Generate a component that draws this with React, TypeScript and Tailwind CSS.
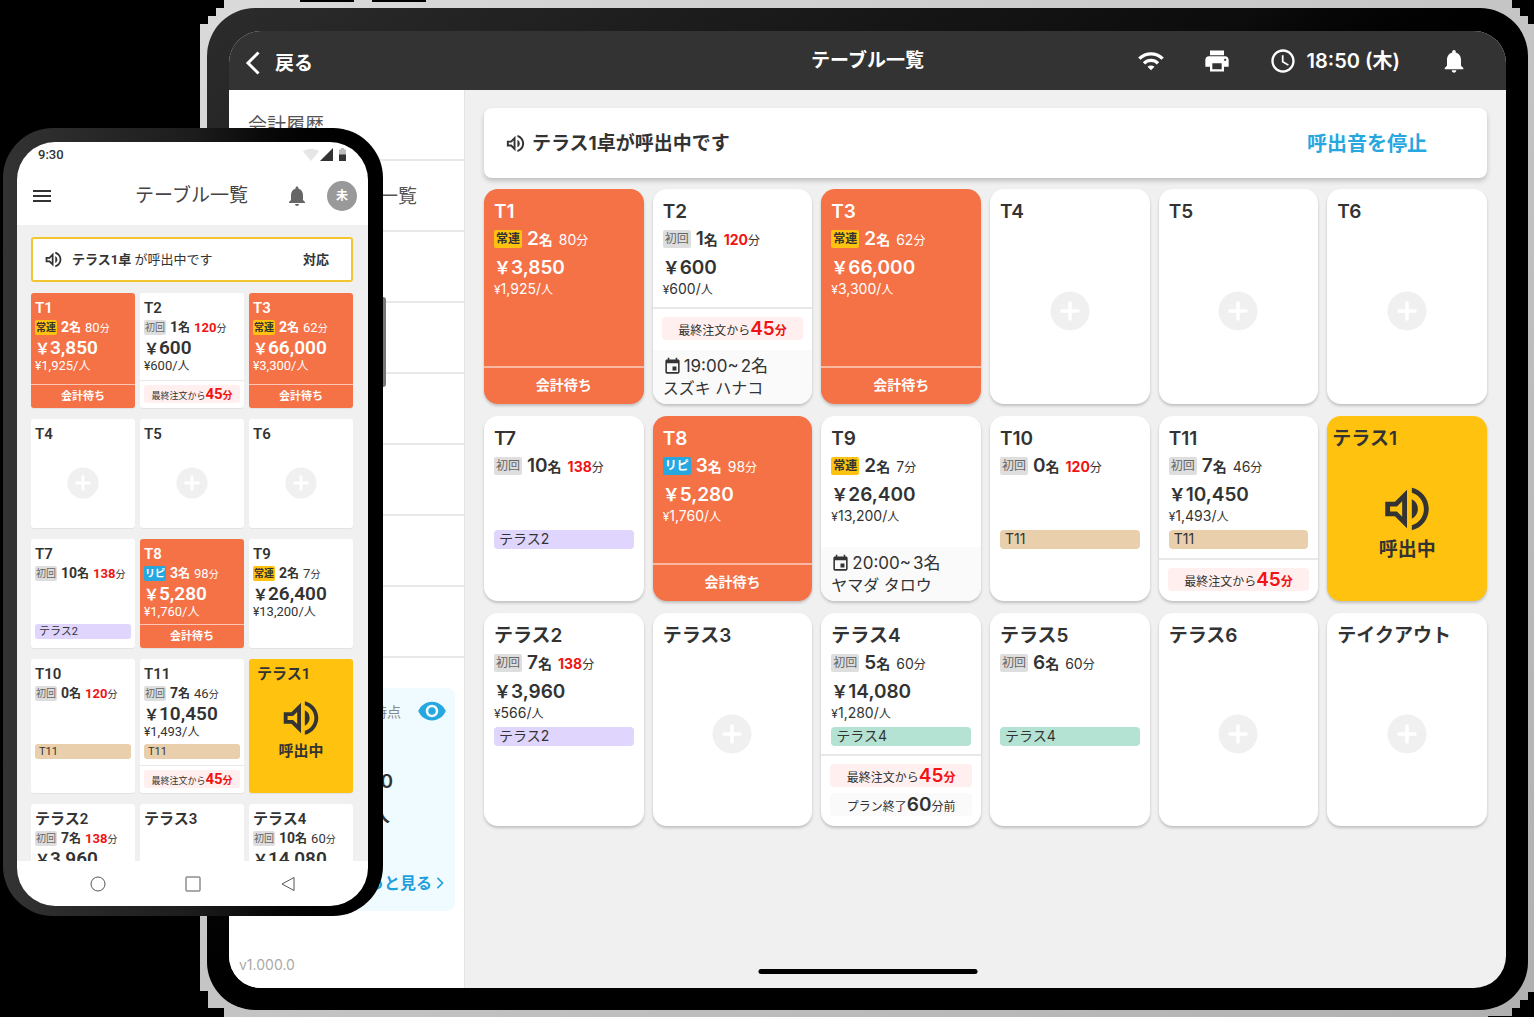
import React from "react";
import {
  MdAccessTime,
  MdEvent,
  MdMenu,
  MdNotifications,
  MdOutlineVolumeUp,
  MdPrint,
  MdVisibility,
  MdWifi,
} from "react-icons/md";

type Visit = "常連" | "初回" | "リピ";
type Tone = "plain" | "orange" | "yellow";

interface TableInfo {
  name: string;
  tone?: Tone;
  visit?: Visit;
  guests?: number;
  minutes?: number;
  total?: string;
  each?: string;
  tag?: string;
  lastOrder?: number;
  planEnd?: number;
  booking?: { time: string; party: string; guest: string };
}

const tabletTables: TableInfo[] = [
  { name: "T1", tone: "orange", visit: "常連", guests: 2, minutes: 80, total: "3,850", each: "1,925" },
  {
    name: "T2", visit: "初回", guests: 1, minutes: 120, total: "600", each: "600", lastOrder: 45,
    booking: { time: "19:00~", party: "2名", guest: "スズキ ハナコ" },
  },
  { name: "T3", tone: "orange", visit: "常連", guests: 2, minutes: 62, total: "66,000", each: "3,300" },
  { name: "T4" },
  { name: "T5" },
  { name: "T6" },
  { name: "T7", visit: "初回", guests: 10, minutes: 138, tag: "テラス2" },
  { name: "T8", tone: "orange", visit: "リピ", guests: 3, minutes: 98, total: "5,280", each: "1,760" },
  {
    name: "T9", visit: "常連", guests: 2, minutes: 7, total: "26,400", each: "13,200",
    booking: { time: "20:00~", party: "3名", guest: "ヤマダ タロウ" },
  },
  { name: "T10", visit: "初回", guests: 0, minutes: 120, tag: "T11" },
  { name: "T11", visit: "初回", guests: 7, minutes: 46, total: "10,450", each: "1,493", tag: "T11", lastOrder: 45 },
  { name: "テラス1", tone: "yellow" },
  { name: "テラス2", visit: "初回", guests: 7, minutes: 138, total: "3,960", each: "566", tag: "テラス2" },
  { name: "テラス3" },
  {
    name: "テラス4", visit: "初回", guests: 5, minutes: 60, total: "14,080", each: "1,280",
    tag: "テラス4", lastOrder: 45, planEnd: 60,
  },
  { name: "テラス5", visit: "初回", guests: 6, minutes: 60, tag: "テラス4" },
  { name: "テラス6" },
  { name: "テイクアウト" },
];

const phoneTables: TableInfo[] = [
  { name: "T1", tone: "orange", visit: "常連", guests: 2, minutes: 80, total: "3,850", each: "1,925" },
  { name: "T2", visit: "初回", guests: 1, minutes: 120, total: "600", each: "600", lastOrder: 45 },
  { name: "T3", tone: "orange", visit: "常連", guests: 2, minutes: 62, total: "66,000", each: "3,300" },
  { name: "T4" },
  { name: "T5" },
  { name: "T6" },
  { name: "T7", visit: "初回", guests: 10, minutes: 138, tag: "テラス2" },
  { name: "T8", tone: "orange", visit: "リピ", guests: 3, minutes: 98, total: "5,280", each: "1,760" },
  { name: "T9", visit: "常連", guests: 2, minutes: 7, total: "26,400", each: "13,200" },
  { name: "T10", visit: "初回", guests: 0, minutes: 120, tag: "T11" },
  { name: "T11", visit: "初回", guests: 7, minutes: 46, total: "10,450", each: "1,493", tag: "T11", lastOrder: 45 },
  { name: "テラス1", tone: "yellow" },
  { name: "テラス2", visit: "初回", guests: 7, minutes: 138, total: "3,960" },
  { name: "テラス3" },
  { name: "テラス4", visit: "初回", guests: 10, minutes: 60, total: "14,080" },
];

const toneClass: Record<Tone, string> = {
  plain: "bg-white text-[#333]",
  orange: "bg-[#f57146] text-white",
  yellow: "bg-[#ffc20e] text-[#333]",
};

const visitClass: Record<Visit, string> = {
  常連: "bg-[#ffc20e] text-[#333] font-bold",
  初回: "bg-[#dedede] text-[#666]",
  リピ: "bg-[#27a7df] text-white font-bold",
};

const tagClass: Record<string, string> = {
  テラス2: "bg-[#dfd5fd]",
  T11: "bg-[#e9cfab]",
  テラス4: "bg-[#b5e3d3]",
};

function PlusMark({ className }: { className: string }) {
  return (
    <svg viewBox="0 0 40 40" className={className} aria-hidden="true">
      <circle cx="20" cy="20" r="19.5" fill="#f0f0f0" />
      <path d="M20 12v16M12 20h16" stroke="#fff" strokeWidth="3.6" strokeLinecap="round" />
    </svg>
  );
}

function Minutes({ value, className }: { value: number; className: string }) {
  return <span className={value >= 120 ? `font-bold text-[#f01414] ${className}` : className}>{value}</span>;
}

function TabletCard({ table }: { table: TableInfo }) {
  const tone = table.tone ?? "plain";
  const empty = tone === "plain" && table.guests === undefined;
  return (
    <button
      type="button"
      className={`flex flex-col overflow-hidden rounded-[14px] text-left shadow-[0_2px_3px_rgba(0,0,0,0.2)] ${toneClass[tone]}`}
    >
      <span className={`mt-2 block h-7 pt-px text-[19px] leading-7 font-semibold whitespace-nowrap ${tone === "yellow" ? "pl-[5px]" : "pl-[10px]"}`}>
        {table.name}
      </span>
      {tone === "yellow" && (
        <span className="flex w-full flex-1 flex-col items-center justify-center pb-3">
          <MdOutlineVolumeUp className="size-[58px]" />
          <span className="text-[19px] leading-6 font-bold">呼出中</span>
        </span>
      )}
      {empty && (
        <span className="flex w-full flex-1 items-center justify-center pb-2">
          <PlusMark className="size-10" />
        </span>
      )}
      {table.guests !== undefined && (
        <>
          <span className="flex w-full flex-col px-[10px]">
            <span className="flex h-7 items-center gap-[5px]">
              <span className={`rounded-[2px] px-0.5 text-[12px] leading-[18px] ${visitClass[table.visit!]}`}>{table.visit}</span>
              <span className="flex items-baseline pt-0.5 leading-7 whitespace-nowrap">
                <span className="text-[19px] font-semibold">{table.guests}</span>
                <span className="text-[14px] font-bold">名</span>
                <Minutes value={table.minutes!} className="ml-1.5 text-[14px]" />
                <span className="text-[12px]">分</span>
              </span>
            </span>
            <span className="flex h-7 items-baseline pt-px leading-7 font-semibold whitespace-nowrap">
              {table.total && (
                <>
                  <span className="text-[17px]">￥</span>
                  <span className="text-[19px]">{table.total}</span>
                </>
              )}
            </span>
            <span className="flex h-3.5 items-baseline leading-4 whitespace-nowrap">
              {table.each && (
                <>
                  <span className="text-[12px]">¥</span>
                  <span className="text-[14px]">{table.each}/</span>
                  <span className="text-[12px]">人</span>
                </>
              )}
            </span>
            {table.tag && (
              <span className={`mt-2 block h-[19px] rounded-[4px] px-[5px] text-[14px] leading-[18px] ${tagClass[table.tag]}`}>
                {table.tag}
              </span>
            )}
          </span>
          <span className="mt-auto flex w-full flex-col">
            {tone === "orange" && (
              <span className="border-t-2 border-white/50 pb-0.5 text-center text-[14px] leading-[34px] font-bold">会計待ち</span>
            )}
            {table.lastOrder && (
              <span className="flex flex-col gap-1.5 border-t-2 border-[#e8e8e8] px-[9px] pt-2 pb-[10px]">
                <span className="flex h-[23px] items-baseline justify-center rounded-[4px] bg-[#ffefef] leading-[23px]">
                  <span className="text-[12px]">最終注文から</span>
                  <span className="text-[19px] font-semibold text-[#f01414]">{table.lastOrder}</span>
                  <span className="text-[12px] font-bold text-[#f01414]">分</span>
                </span>
                {table.planEnd && (
                  <span className="flex h-[23px] items-baseline justify-center rounded-[4px] bg-[#fafafa] leading-[23px]">
                    <span className="text-[12px]">プラン終了</span>
                    <span className="text-[19px] font-semibold">{table.planEnd}</span>
                    <span className="text-[12px]">分前</span>
                  </span>
                )}
              </span>
            )}
            {table.booking && (
              <span className="flex flex-col bg-[#fafafa] px-[10px] pt-[5px] pb-[5px] leading-[22px]">
                <span className="flex items-center gap-0.5 text-[17px]">
                  <MdEvent className="size-[19px]" />
                  <span>{table.booking.time}</span>
                  <span>{table.booking.party}</span>
                </span>
                <span className="text-[16px]">{table.booking.guest}</span>
              </span>
            )}
          </span>
        </>
      )}
    </button>
  );
}

function PhoneCard({ table }: { table: TableInfo }) {
  const tone = table.tone ?? "plain";
  const empty = tone === "plain" && table.guests === undefined;
  return (
    <button
      type="button"
      className={`flex flex-col overflow-hidden rounded-[3px] text-left shadow-[0_1px_1px_rgba(0,0,0,0.06)] ${toneClass[tone]}`}
    >
      <span className={`mt-1.5 block h-[19px] text-[15px] leading-[19px] font-semibold whitespace-nowrap ${tone === "yellow" ? "pl-2" : "pl-1"}`}>
        {table.name}
      </span>
      {tone === "yellow" && (
        <span className="flex w-full flex-1 flex-col items-center justify-center pb-[22px]">
          <MdOutlineVolumeUp className="size-[46px]" />
          <span className="text-[15px] leading-5 font-bold">呼出中</span>
        </span>
      )}
      {empty && (
        <span className="flex w-full flex-1 items-center justify-center pb-1.5">
          <PlusMark className="size-8" />
        </span>
      )}
      {table.guests !== undefined && (
        <>
          <span className="flex w-full flex-col px-1">
            <span className="flex h-[19px] items-center gap-1">
              <span className={`rounded-[2px] px-px text-[10px] leading-[15px] whitespace-nowrap ${visitClass[table.visit!]}`}>{table.visit}</span>
              <span className="flex items-baseline leading-[19px] whitespace-nowrap">
                <span className="text-[14px] font-bold">{table.guests}</span>
                <span className="text-[12px] font-bold">名</span>
                <Minutes value={table.minutes!} className="ml-1 text-[13px]" />
                <span className="text-[10px]">分</span>
              </span>
            </span>
            <span className="flex h-[22px] items-baseline leading-[22px] font-semibold whitespace-nowrap">
              {table.total && (
                <>
                  <span className="text-[15px]">￥</span>
                  <span className="text-[19px]">{table.total}</span>
                </>
              )}
            </span>
            <span className="flex h-3.5 items-baseline leading-[14px] whitespace-nowrap">
              {table.each && (
                <>
                  <span className="text-[12px]">¥</span>
                  <span className="text-[13px]">{table.each}/</span>
                  <span className="text-[12px]">人</span>
                </>
              )}
            </span>
            {table.tag && (
              <span className={`mt-[5px] block h-[15px] rounded-[3px] px-1 text-[11px] leading-[15px] ${tagClass[table.tag]}`}>
                {table.tag}
              </span>
            )}
          </span>
          <span className="mt-auto flex w-full flex-col">
            {tone === "orange" && (
              <span className="border-t border-white/60 text-center text-[11px] leading-[23px] font-bold">会計待ち</span>
            )}
            {table.lastOrder && (
              <span className="border-t border-[#e8e8e8] px-1 pt-1 pb-[5px]">
                <span className="flex h-[18px] items-baseline justify-center rounded-[3px] bg-[#ffefef] leading-[18px] whitespace-nowrap">
                  <span className="text-[9px]">最終注文から</span>
                  <span className="text-[15px] font-bold text-[#f01414]">{table.lastOrder}</span>
                  <span className="text-[10px] font-bold text-[#f01414]">分</span>
                </span>
              </span>
            )}
          </span>
        </>
      )}
    </button>
  );
}

function Tablet() {
  return (
    <div className="relative ml-[200px] flex min-h-screen bg-linear-to-br from-[#dadada] to-[#b0b0b0] pt-2 pr-1.5 pb-[7px] pl-[7px] [clip-path:polygon(24px_0,calc(100%_-_22px)_0,calc(100%_-_22px)_8px,calc(100%_-_14px)_8px,calc(100%_-_14px)_16px,calc(100%_-_6px)_16px,calc(100%_-_6px)_24px,100%_24px,100%_calc(100%_-_25px),calc(100%_-_6px)_calc(100%_-_25px),calc(100%_-_6px)_calc(100%_-_17px),calc(100%_-_14px)_calc(100%_-_17px),calc(100%_-_14px)_calc(100%_-_9px),calc(100%_-_22px)_calc(100%_-_9px),calc(100%_-_22px)_calc(100%_-_1px),calc(100%_-_46px)_calc(100%_-_1px),calc(100%_-_46px)_100%,24px_100%,24px_calc(100%_-_9px),8px_calc(100%_-_9px),8px_calc(100%_-_26px),0_calc(100%_-_26px),0_24px,8px_24px,8px_16px,16px_16px,16px_8px,24px_8px)]">
      <div className="flex flex-1 rounded-[48px] bg-linear-to-br from-[#2c2c2c] via-[#0c0c0c] via-40% to-black to-55% px-[22px] pt-[23px] pb-[22px]">
        <div className="relative flex flex-1 flex-col overflow-hidden rounded-[32px] bg-[#f0f0f0]">
          <header className="grid h-[59px] grid-cols-3 items-center bg-[#333] text-white">
            <button type="button" className="flex items-center gap-3 pt-1 pl-4 text-[19px] leading-7 font-bold">
              <svg viewBox="0 0 16 24" className="h-6 w-4" fill="none" stroke="currentColor" strokeWidth="3" aria-hidden="true">
                <path d="M13.500 1.500 3 12l10.500 10.500" />
              </svg>
              <span className="pt-0.5 pl-0.5">戻る</span>
            </button>
            <h1 className="pt-px text-center text-[19px] leading-7 font-bold">テーブル一覧</h1>
            <div className="flex items-center justify-end pr-[38px]">
              <MdWifi className="mr-[38px] size-7" />
              <MdPrint className="mr-[38px] size-7" />
              <MdAccessTime className="mr-2.5 size-7" />
              <time className="mr-10 text-[20px] leading-7 font-semibold whitespace-nowrap">18:50 (木)</time>
              <button type="button" aria-label="通知">
                <MdNotifications className="size-7" />
              </button>
            </div>
          </header>
          <div className="flex flex-1">
            <aside className="flex w-[236px] shrink-0 flex-col border-r border-[#e4e4e4] bg-white text-[#555]">
              <nav className="text-[19px]">
                <a href="#history" className="flex h-[71px] items-center border-b-2 border-[#e8e8e8] pt-1 pl-[19px]">会計履歴</a>
                <a href="#list" className="flex h-[71px] items-center border-b-2 border-[#e8e8e8] pt-1 pl-[150px]">一覧</a>
                <span className="block h-[71px] border-b-2 border-[#e8e8e8]" />
                <span className="block h-[71px] border-b-2 border-[#e8e8e8]" />
                <span className="block h-[71px] border-b-2 border-[#e8e8e8]" />
                <span className="block h-[71px] border-b-2 border-[#e8e8e8]" />
                <span className="block h-[71px] border-b-2 border-[#e8e8e8]" />
                <span className="block h-[71px] border-b-2 border-[#e8e8e8]" />
              </nav>
              <section className="mt-[30px] mr-[9px] ml-[9px] flex h-[223px] flex-col items-end rounded-lg bg-[#effbfe] pt-2 pr-2">
                <div className="flex items-center gap-4 text-[14px] text-[#888]">
                  <span>時点</span>
                  <button type="button" aria-label="表示" className="text-[#27a7df]">
                    <MdVisibility className="size-[30px]" />
                  </button>
                </div>
                <p className="mt-[42px] pr-[54px] text-[19px] leading-7 font-semibold text-[#333]">0</p>
                <p className="mt-1.5 pr-[57px] text-[19px] leading-7 font-bold text-[#333]">人</p>
                <a href="#more" className="mt-auto mb-4 flex items-center gap-1 pr-[3px] text-[16px] leading-6 font-bold text-[#1f9fdc]">
                  もっと見る
                  <svg viewBox="0 0 8 14" className="h-3 w-2" fill="none" stroke="currentColor" strokeWidth="1.800" aria-hidden="true">
                    <path d="m1 1 6 6-6 6" />
                  </svg>
                </a>
              </section>
              <p className="mt-auto mb-[11px] pl-[10px] text-[14px] leading-6 text-[#aaa]">v1.000.0</p>
            </aside>
            <main className="flex-1 px-[19px] pt-[18px] pb-12">
              <div className="flex h-[70px] items-center rounded-lg bg-white pr-[60px] pl-5 text-[19px] leading-7 font-bold text-[#333] shadow-[0_3px_5px_rgba(0,0,0,0.2)]">
                <MdOutlineVolumeUp className="size-[23px]" />
                <p className="ml-[5px] flex-1 pt-0.5">テラス1卓が呼出中です</p>
                <button type="button" className="pt-0.5 text-[20px] text-[#27a7df]">呼出音を停止</button>
              </div>
              <div className="mt-[11px] grid grid-cols-6 grid-rows-[minmax(215px,auto)_minmax(185px,auto)_minmax(213px,auto)] gap-x-[9px] gap-y-3">
                {tabletTables.map((table) => (
                  <TabletCard key={table.name} table={table} />
                ))}
              </div>
            </main>
          </div>
          <div className="absolute bottom-3.5 left-1/2 h-[5px] w-[219px] -translate-x-1/2 rounded-full bg-black" />
        </div>
      </div>
      <div className="absolute top-0 left-[100px] h-0.5 w-[54px] bg-black" />
      <div className="absolute top-0 left-[172px] h-0.5 w-[54px] bg-black" />
    </div>
  );
}

function Phone() {
  return (
    <div className="absolute top-32 left-[3px] h-[788px] w-[380px] font-['Roboto','Noto_Sans_CJK_JP',sans-serif]">
      <div className="absolute top-[169px] -right-[3px] h-[90px] w-[3px] rounded-r-sm bg-[#777]" />
      <div className="flex h-full rounded-[50px] bg-linear-to-r from-[#333] via-[#1c1c1c] to-black pt-3.5 pr-[15px] pb-2.5 pl-3.5">
        <div className="flex flex-1 flex-col overflow-hidden rounded-[38px] bg-white text-[#333]">
          <div className="flex h-[25px] items-center justify-between pr-[21px] pl-[21px] text-[13px] font-medium">
            <span>9:30</span>
            <svg viewBox="0 0 44 14" className="h-3.5 w-11" aria-hidden="true">
              <path d="M0 3.500C4.500-.2 11.500-.2 16 3.500L8 13z" fill="#e6e6e6" />
              <path d="M30 0v13H17z" fill="#333" />
              <path d="M36 1.500h2V0h3v1.500h2V7h-7V1.500z" fill="#bdbdbd" />
              <path d="M36 6.500h7V13h-7z" fill="#333" />
            </svg>
          </div>
          <header className="flex h-[58px] items-center pr-[11px] pl-[13px]">
            <button type="button" aria-label="メニュー">
              <MdMenu className="size-6" />
            </button>
            <h2 className="flex-1 pl-[60px] text-center text-[19px] leading-7 text-[#444]">テーブル一覧</h2>
            <button type="button" aria-label="通知" className="mr-[18px] ml-4 text-[#666]">
              <MdNotifications className="size-6" />
            </button>
            <span className="flex size-[30px] items-center justify-center rounded-full bg-[#999] text-[12px] font-bold text-white">未</span>
          </header>
          <main className="min-h-0 flex-1 overflow-hidden bg-[#f0f0f0] px-3.5 pt-3 pr-[15px]">
            <div className="flex h-[45px] items-center rounded-[3px] border-2 border-[#f3c62f] bg-white pr-[22px] pl-[10px] text-[13px]">
              <MdOutlineVolumeUp className="size-[21px]" />
              <p className="ml-2 flex-1">
                <b>テラス1卓</b> が呼出中です
              </p>
              <button type="button" className="font-bold">対応</button>
            </div>
            <div className="mt-[11px] grid grid-cols-3 grid-rows-[minmax(115px,auto)_minmax(109px,auto)_minmax(109px,auto)_minmax(134px,auto)_minmax(180px,auto)] gap-x-[5px] gap-y-[11px]">
              {phoneTables.map((table) => (
                <PhoneCard key={table.name} table={table} />
              ))}
            </div>
          </main>
          <nav className="flex h-[45px] items-center justify-center gap-[79px] pl-px text-[#555]">
            <button type="button" aria-label="ホーム" className="size-4">
              <svg viewBox="0 0 16 16" fill="none" stroke="currentColor" aria-hidden="true">
                <circle cx="8" cy="8" r="7" />
              </svg>
            </button>
            <button type="button" aria-label="履歴" className="size-4">
              <svg viewBox="0 0 16 16" fill="none" stroke="currentColor" aria-hidden="true">
                <rect x="1" y="1" width="14" height="14" rx="0.500" />
              </svg>
            </button>
            <button type="button" aria-label="戻る" className="size-4">
              <svg viewBox="0 0 16 16" fill="none" stroke="currentColor" strokeLinejoin="round" aria-hidden="true">
                <path d="M14 1.500v13L2 8z" />
              </svg>
            </button>
          </nav>
        </div>
      </div>
    </div>
  );
}

export default function App() {
  return (
    <div className="relative min-h-screen overflow-hidden bg-black font-['Inter','Noto_Sans_CJK_JP',sans-serif]">
      <Tablet />
      <Phone />
    </div>
  );
}
